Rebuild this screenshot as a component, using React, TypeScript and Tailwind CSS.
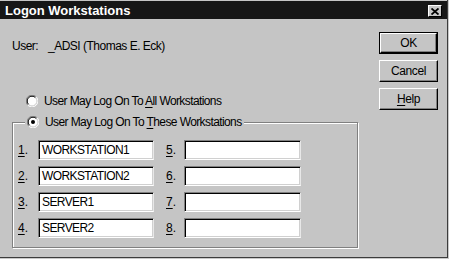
import React from "react";

const font = { fontFamily: '"Liberation Sans", Arial, sans-serif' };

function Radio({ checked }: { checked?: boolean }) {
  return (
    <svg width="12" height="12" viewBox="0 0 12 12" className="shrink-0">
      <circle cx="6" cy="6" r="5" fill="#fff" />
      <path d="M1.8 10.2 A5.9 5.9 0 0 1 10.2 1.8" stroke="#808080" strokeWidth="1" fill="none" />
      <path d="M10.2 1.8 A5.9 5.9 0 0 1 1.8 10.2" stroke="#fff" strokeWidth="1" fill="none" />
      <path d="M2.6 9.4 A4.8 4.8 0 0 1 9.4 2.6" stroke="#000" strokeWidth="1" fill="none" />
      <path d="M9.4 2.6 A4.8 4.8 0 0 1 2.6 9.4" stroke="#d8d8d8" strokeWidth="1" fill="none" />
      {checked && <circle cx="6" cy="6" r="2" fill="#000" />}
    </svg>
  );
}

function Button({ children, isDefault }: { children: React.ReactNode; isDefault?: boolean }) {
  return (
    <div
      className={
        "w-[59px] h-[22px] flex items-center justify-center text-[12px] tracking-[-0.4px] text-black " +
        (isDefault ? "border border-black" : "")
      }
    >
      <div className="w-full h-full flex items-center justify-center border border-t-white border-l-white border-r-black border-b-black shadow-[inset_-1px_-1px_0_#808080]">
        {children}
      </div>
    </div>
  );
}

function Field({ value, width }: { value: string; width: string }) {
  return (
    <div
      className={
        width +
        " h-[20px] bg-white border border-t-[#808080] border-l-[#808080] border-b-white border-r-[#e8e8e8] shadow-[inset_1px_1px_0_#000,inset_-1px_-1px_0_#d0d0d0] pl-[3px] flex items-center text-[12px] tracking-[-0.6px] text-black"
      }
    >
      {value}
    </div>
  );
}

const left = ["WORKSTATION1", "WORKSTATION2", "SERVER1", "SERVER2"];

export default function App() {
  return (
    <div className="w-[449px] h-[259px] bg-[#c9c9c9]" style={font}>
      <div className="w-[448px] h-[258px] pt-px flex flex-col bg-[#c5c5c5] border-r border-b border-[#3c3c3c]">
        <div className="h-[18px] bg-[#161616] flex items-center justify-between pl-[5px] pr-[5px]">
          <span className="text-white font-bold text-[13px] leading-none">Logon Workstations</span>
          <div className="w-[14px] h-[12px] mt-[2px] bg-[#c8c8c8] border border-t-white border-l-white border-r-black border-b-black flex items-center justify-center">
            <svg width="8" height="7" viewBox="0 0 8 7">
              <path d="M0.5 0.5 L7.5 6.5 M7.5 0.5 L0.5 6.5" stroke="#000" strokeWidth="1.8" />
            </svg>
          </div>
        </div>

        <div className="flex flex-1">
          <div className="w-[367px] pl-[12px]">
            <div className="mt-[19px] h-[16px] flex items-center text-[12px] tracking-[-0.5px] text-black">
              <span className="w-[36px]">User:</span>
              <span>_ADSI (Thomas E. Eck)</span>
            </div>

            <div className="mt-[39px] h-[16px] pl-[14px] flex items-center gap-[6px] text-[12px] tracking-[-0.6px] text-black">
              <Radio />
              <span>
                User May Log On To <span className="underline underline-offset-2">A</span>ll Workstations
              </span>
            </div>

            <div className="relative mt-[13px] w-[346px] h-[126px] border border-[#808080] shadow-[inset_1px_1px_0_#fff,1px_1px_0_#fff] pt-[17px] pl-[5px]">
              <div className="absolute top-[-9px] left-[12px] h-[16px] px-[2px] bg-[#c5c5c5] flex items-center gap-[6px] text-[12px] tracking-[-0.6px] text-black">
                <Radio checked />
                <span>
                  User May Log On To <span className="underline underline-offset-2">T</span>hese Workstations
                </span>
              </div>

              <div className="flex flex-col gap-[6px]">
                {left.map((v, i) => (
                  <div key={i} className="flex items-center text-[12px] text-black">
                    <span className="w-[20px]">
                      <span className="underline underline-offset-2">{i + 1}</span>.
                    </span>
                    <Field value={v} width="w-[116px]" />
                    <span className="w-[18px] ml-[12px]">
                      <span className="underline underline-offset-2">{i + 5}</span>.
                    </span>
                    <Field value="" width="w-[117px]" />
                  </div>
                ))}
              </div>
            </div>
          </div>

          <div className="pt-[13px] pl-[12px] flex flex-col gap-[6px]">
            <Button isDefault>OK</Button>
            <Button>Cancel</Button>
            <Button>
              <span>
                <span className="underline underline-offset-2">H</span>elp
              </span>
            </Button>
          </div>
        </div>
      </div>
    </div>
  );
}
